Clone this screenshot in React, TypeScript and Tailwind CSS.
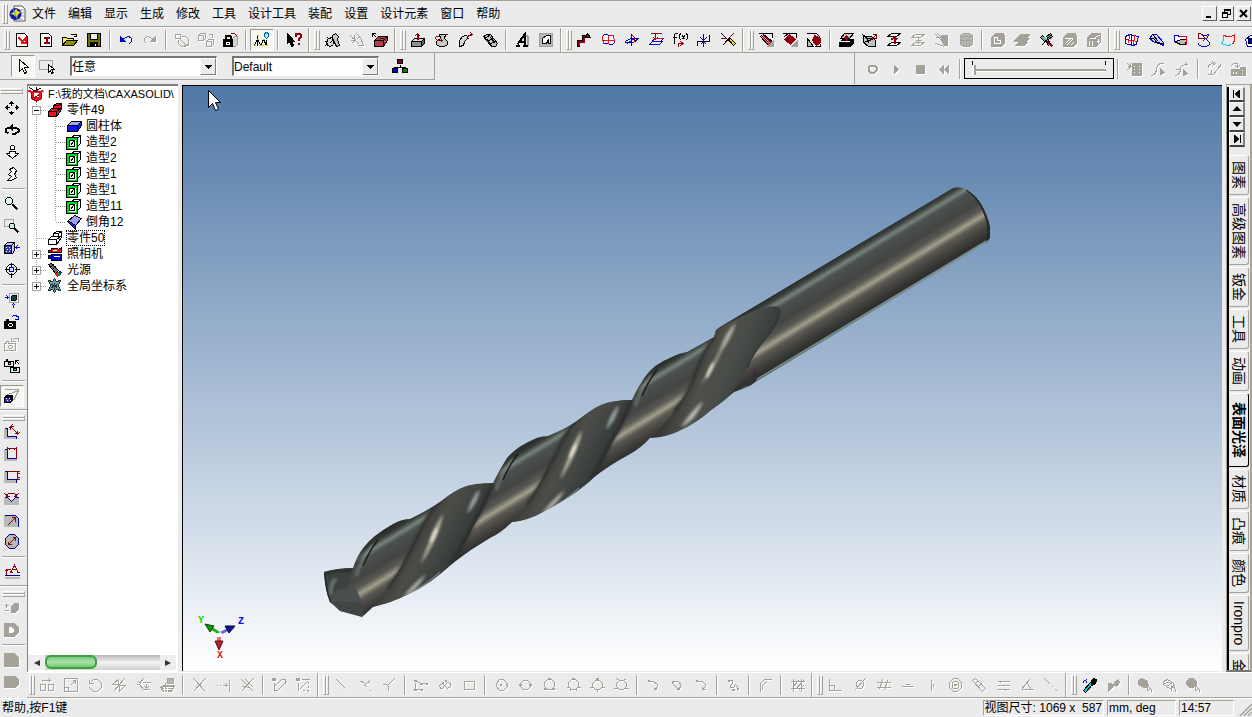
import { useState } from "react";
import clsx from "clsx";

const K = "#000000";
const R = "#900010";
const B = "#0000d0";
const G = "#a5a29a";
const W = "#ffffff";
const S = "#b8b8b4";
const N = "none";
const RED = "#f01020";
const CY = "#00d0d0";
const GN = "#00a000";

// [path, stroke, fill, stroke width]
type Shape = [string, string, string?, number?];

const icons: Record<string, Shape[]> = {
  // standard
  "new-design": [["M2 1h8l3 3v10h-11z", K, W], ["M4 5l4 4l3 -3v4h-5M8 10l3 1", RED, N, 2]],
  "new-drawing": [["M2 1h8l3 3v10h-11z", K, W], ["M5 5h6M5 10h6M8 5v5", R, N, 2]],
  open: [["M0 13v-8h4l1 1h6v3", K, "#f0f060"], ["M0 13l4 -5h11l-4 5z", K, "#909000"], ["M8 3q3 -3 6 0m0 -2v3h-3", K]],
  save: [["M1 1h13v13h-13z", K, "#707000"], ["M4 1h7v6h-7z", K, "#ebebeb"], ["M4 10h7v4h-7z", K, K], ["M9 11v2", W]],
  undo: [["M2 4v5h5zM4 7l3 -2q4 -2 6 1q1 3 -2 5", B, N], ["M2 5v4h4z", B, B]],
  redo: [["M13 4v5h-5zM11 7l-3 -2q-4 -2 -6 1q-1 3 2 5", G], ["M13 5v4h-4z", G, G]],
  regenerate: [["M1 2h5v4h-5zM7 4h4l3 3v4l-3 3h-4l-3 -3v-4M5 6l7 7M9 13h5v-4", G]],
  "copy-part": [["M0 3h5v5h-5zM0 3l2 -2h5v5l-2 2M8 9h5v5h-5zM8 9l2 -2h5v5l-2 2M10 2h4v3", G]],
  lock: [["M8 1h4q2 1 2 4M14 2v4h-3", R], ["M10 6l2 -2h3v8l-2 2h-3z", G, "#d0d0cc"], ["M1 7h9v7h-9z", K, K], ["M3 7v-3l1 -1h3l1 1v3", K, N, 2], ["M4 10h3v2h-3z", W]],
  "tree-view": [["M3 3v3l-3 7M3 6l3 7M8 7v1l-1 5M9 7l3 6M3 6v7", K], ["M3 2v1M3 6v1M0 12v1M5 12v1M9 6v1M12 12v1M8 12v1", "#c8c000", N, 2], ["M10 1l2 -1l2 1v3l-2 2l-2 -2z", "#0060b0", "#a0f0ff"], ["M12 7v4", K]],
  help: [["M1 1v10l2 -2l2 5l2 -1l-2 -4h3z", K, K], ["M9 4v-2l2 -1h2l1 1v3l-2 2v1M12 10v2", R, N, 2]],
  // animation
  gear: [["M2 9l2 -3l3 -1l3 3l-1 4l-3 2l-3 -1z", K, "#d8d8d0"], ["M0 9h3M3 5l2 2M6 4v2M1 13l3 -2M5 11l3 -3", K], ["M8 3l3 -2l3 3l-1 3l2 6l-3 1l-4 -8z", K, "#c8c8c0"]],
  "gear-off": [["M2 3l9 9M2 8h5M6 2v7M3 11l4 -4", G], ["M8 1l4 4l3 8h-6M9 6l3 -2M3 6h3", G]],
  block: [["M2 8l4 -4h9v4l-4 6h-9z", K, "#b04048"], ["M2 8h9l4 -4M11 8v6M7 6h4", K], ["M0 1l4 4M0 4v-3h3", K]],
  extrude: [["M1 9l3 -3h10l-3 3z", K, "#d8d8d4"], ["M11 9l3 -3v5l-3 3z", K, "#606060"], ["M1 9h10v5h-10z", K, "#909090"], ["M7 7v-6", R, N, 2], ["M4 4l3 -3l3 3", R]],
  revolve: [["M5 2h6l-1 4l3 3v3l-3 2h-5l-3 -2v-3l4 -3z", K, "#c8c8c4"], ["M10 2h3M4 4h-2q-2 2 1 4h5M6 6l2 2l-2 2", R]],
  sweep: [["M1 14v-5q2 -6 7 -6l2 3q-4 1 -5 7z", K, "#d8d8d4"], ["M8 5q3 -3 6 -3M12 0l2 2l-2 2", R]],
  loft: [["M1 4l3 -2h4l7 9l-2 3h-4z", K, "#c0c0bc"], ["M1 4l3 1l4 -3M4 7l3 1l4 -3M6 10l3 1l4 -3M2 5l8 9M8 5l5 6", K]],
  "text-3d": [["M11 3l2 1v9", G, N, 2], ["M3 12l7 -10v10M5 9h5M1 13h4M8 13h5", K, N, 2]],
  stencil: [["M1 1h13v13h-13z", G, S], ["M4 6l4 -3h4v8h-2v-4l-2 4h-4z", K, W]],
  // curves
  "curve-3d": [["M2 14v-5h5v-5h3", K, N, 3], ["M2 13v-4h5v-5h3", R, N, 2], ["M8 5l3 -4l3 4z", K, R]],
  surface: [["M2 4q4 -4 6 -1h5l1 7q-4 4 -6 1h-5z", B, W], ["M2 4l1 8M8 3h5l1 7M3 8h10M8 3v8", RED]],
  plane: [["M1 9l5 -3h8l-5 4h-8z", B, "#e8e8ff"], ["M7 1v12M3 11l8 -6", B], ["M8 3l2 2v4l-2 2", R]],
  parallel: [["M1 12l3 -3h10l-3 3zM4 8l3 -2h8l-3 3", B], ["M2 1h11M7 1v6M5 5l2 2l2 -2", R], ["M4 9l3 -3h7", RED]],
  formula: [["M0 5h4M2 11v-9l1 -1h2M8 1q-2 3 0 7M10 3l2 4M12 3l-2 4M14 1q2 3 0 7", K], ["M6 14v-3h4M8 9l3 2l-3 2", R]],
  split: [["M1 13v-4h12v-7", K], ["M7 1v13M4 5l3 3l3 -3M4 12l3 -3l3 3", B]],
  trim: [["M1 1l12 12M2 13l11 -12", K], ["M0 6h6M9 5l4 -4", R], ["M8 7l2 -1l5 5l-2 2z", K, "#f0e000"]],
  // faces
  "face-blend": [["M0 1h14v4", K], ["M2 4l3 -2l9 7l-4 4z", K, R], ["M4 3l8 8M3 4l8 8", "#e0a0a0"], ["M15 8v6h-6z", G, G]],
  "face-chamfer": [["M0 1h14v4", K], ["M7 2l6 5l-5 5l-6 -5z", R, R], ["M15 8v6h-6z", G, G], ["M2 4l4 -3", K]],
  "face-draft": [["M0 1h10l4 4", K], ["M8 3l6 3v4l-4 3l-4 -5z", R, R], ["M1 6v8h6l-3 -4z", K, S], ["M8 14h6v-3", K]],
  "layer-up": [["M1 10l3 -3h11v4l-3 3h-11z", K, K], ["M2 6l4 -5h9l-4 5z", K, "#c8c8c4"], ["M8 10v-6M6 6l2 -2l2 2", R, N, 2], ["M1 9h10", W]],
  "layer-cut": [["M1 4h8l4 4v6h-7l-5 -4z", K, "#c0c0bc"], ["M0 2l5 4h8M4 5l2 6M5 9l6 -3M1 10l5 -2", K], ["M7 9l7 -7M10 2h4v4", R]],
  "layer-move": [["M1 4l4 -3h9l-4 3zM1 13l4 -3h9l-4 3z", K, W], ["M8 11v-6M5 7l3 -2l3 2", R, N, 2]],
  "layer-off": [["M1 5l4 -3h9l-4 3zM1 13l4 -3h9l-4 3zM8 11v-6M5 8h6", G]],
  "fill-off": [["M1 2l12 12M3 1l10 9M1 11l9 3M1 5h7", G], ["M8 3h5v10h-3l-3 -5z", G, G]],
  "cylinder-off": [["M2 3l3 -2h6l3 2v9l-3 2h-6l-3 -2z", G, S], ["M2 4h12M5 4v9M8 5v9M11 4v9M2 8h12", G]],
  "solid-a": [["M1 5l4 -4h8l1 3v7l-3 3h-10z", G, G], ["M4 5v6h6v-3h-3v-3z", W, N]],
  "solid-b": [["M5 4l2 -2h8l-2 2zM1 8l2 -2h11l-2 2zM3 12l2 -2h7l-2 2z", G, G, 2]],
  "cut-tool": [["M2 5l2 -2l4 4l-2 2zM8 4l4 -3l2 3l-4 3zM7 8l3 0l2 3l-2 2z", K, "#909c98"], ["M3 13l9 -10", K], ["M9 9l5 5", R, N, 2], ["M6 5l4 4", CY]],
  "solid-c": [["M1 5l4 -4h8l1 3v7l-3 3h-10z", G, G], ["M3 11l5 -5M4 13l6 -6M8 13l3 -3M2 6h8", W]],
  "solid-d": [["M1 5l4 -4h9v9l-4 4h-9z", G, G], ["M3 8v5M6 8v5M9 5l5 -3M10 9h3M12 6v5M3 6h6", W]],
  mesh: [["M1 4l4 -2l9 2l-2 8l-4 1l-7 -2z", B, W], ["M5 2l-1 9M10 3l-1 10M2 7l11 2", RED], ["M7 2v11", B]],
  "mesh-fold": [["M1 6l3 -4h4l7 8v3l-4 -2l-5 -1z", B, "#d0d0f0"], ["M1 6q5 -2 7 4l7 1M4 2l6 7", K]],
  "mesh-sheet": [["M2 3h3l2 1h7l-1 8h-5l-6 -3z", B, W], ["M3 9l6 -2h5l-1 5h-5z", K, S], ["M7 4h7v8", RED]],
  "mesh-revolve": [["M4 1l3 2h3l3 -2M12 2l-2 5l3 3v2l-3 2h-5l-3 -2v-2", B], ["M1 6h8M6 3l3 3l-3 3M4 1h-2v4", R]],
  "mesh-boundary": [["M3 3l4 1h4l3 -2v6l-2 4", RED], ["M3 3v5l-2 3l6 2l4 -1", CY]],
  "mesh-solid": [["M1 7l5 -4h8v8l-4 3h-7z", B, W], ["M4 6h6v5h-6z", K, B]],
  // row 2
  arrow: [["M4 1v12l3 -3l2 5l2 -1l-2 -5h4z", K, W]],
  "box-select": [["M0 2h13v9h-13z", G], ["M9 6v8l2 -2l1 3l2 -1l-2 -3h3z", K, W]],
  hierarchy: [["M8 6v3M2 12v-3h11v3", K], ["M5 1h5v4h-5z", K, R], ["M0 10h5v4h-5z", K, B], ["M10 10h5v4h-5z", K, "#008000"]],
  record: [["M6 4h4l2 2v3l-2 2h-4l-2 -2v-3z", G, N, 2]],
  play: [["M6 4v8l4 -4z", G, G]],
  stop: [["M4 4h8v8h-8z", G, G]],
  rewind: [["M7 4v8l-4 -4zM12 4v8l-4 -4z", G, G]],
  film: [["M6 2h9v12h-9z", G, G], ["M1 2l3 3M4 1v4M1 5h5M1 8l4 -3", G], ["M8 4v1M8 7v1M8 10v1M13 4v1M13 7v1M13 10v1", W]],
  "path-a": [["M1 14q5 -1 5 -7q1 -5 5 -5h2", G], ["M10 7v6l4 -2z", G, G]],
  "path-b": [["M1 14q5 -1 5 -7q0 -4 7 -4M11 1l2 2l-2 2M1 8h4", G], ["M9 8v6l4 -2z", G, G]],
  "key-a": [["M2 6q0 -4 5 -4M6 0l3 2l-3 2M1 13h6l7 -9M14 2v3M5 8v5", G]],
  "key-b": [["M1 5q1 -4 6 -3v3M5 4l2 2l2 -2", G], ["M1 8h8v6h-8zM10 6h5v8h-5z", G, G], ["M3 10v2M6 10v2M12 8v1M12 11v1", W]],
  // camera
  pan: [["M7 3v2M7 10v2M3 7h2M10 7h2", K], ["M7 1l2 2h-4zM7 14l2 -2h-4zM1 7l2 -2v4zM14 7l-2 -2v4z", K, K]],
  orbit: [["M4 11l-3 -2v-2l3 -2h7l3 2v2l-3 2h-4", K, N, 2], ["M8 2v6l-3 -3z", K, K]],
  walk: [["M6 5v-3l1 -1h2l1 1v3zM5 7h6v2h3l-6 5l-6 -5h3z", K, W]],
  "look-at": [["M5 3l4 -2l3 3l-2 4l2 3l-5 3h-4l4 -4l-3 -2l3 -3z", K, W]],
  zoom: [["M1 3l2 -2h3l2 2v3l-2 2h-3l-2 -2z", K, "#d8f8f8"], ["M8 8l5 5", K, N, 2]],
  "zoom-window": [["M0 1h9v7h-9z", G], ["M5 6l1 -1h3l1 1v3l-1 1h-3l-1 -1z", K, "#c0f0f0"], ["M10 10l4 4", K, N, 2]],
  "face-view": [["M0 5l3 -3h7v8l-2 3h-8z", K, "#c8c8ff"], ["M0 5h7v8h-7z", K, "#3838c0"], ["M1 7h1M4 7h1M2 9h1M5 9h1M1 11h1M4 11h1", W], ["M7 5l3 -3", K], ["M10 7h5M13 5l-2 2l2 2", B]],
  target: [["M7 0v5M7 10v5M0 7h5M10 7h5M5 2h4l3 3v4l-3 3h-4l-3 -3v-4z", K], ["M5 5h4v4h-4z", B, "#e0e0ff"]],
  "fit-scene": [["M5 1h9v9h-9z", G], ["M7 4l1 -1h4v4l-1 1h-4z", K, "#104048"], ["M0 5h3M2 3l2 2l-2 2M9 15v-3M7 13l2 -2l2 2", B]],
  "camera-next": [["M0 7h2v-2h2v2h7v7h-11z", K, K], ["M5 9h2l1 1v1l-1 1h-2l-1 -1v-1z", W], ["M7 3l2 -2h3l1 2M14 1v4h-4", B]],
  "camera-prev": [["M0 7h2v-2h2v2h7v7h-11zM5 9h2l1 1v1l-1 1h-2l-1 -1v-1z", G], ["M14 5v-3h-4l-2 2M7 1v4h4", G]],
  "camera-swap": [["M0 3h2v-2h1v2h6v5h-9z", K], ["M4 4h2v2h-2z", K, "#a0ffd0"], ["M6 9h9v5h-9zM8 8v1", K], ["M9 10h3v2h-3z", K, "#50e0e0"], ["M11 5v-3h3M11 2l4 4", K]],
  perspective: [["M0 1h14M1 7l13 -5M9 12l5 -10", G], ["M0 9l2 -2h6v5l-2 2h-6z", K, "#000020"], ["M1 10h4v3h-4z", "#3030b0", "#3030b0"], ["M1 10h1M4 10h1M2 12h1M5 12h1", W]],
  // dimensions
  "dim-smart": [["M0 5h3v7h9v2h-12z", S, S], ["M0 4h3v8h9v2", "#0000a0"], ["M6 2l7 7M6 5v-3h3M13 6v3h-3M12 11l3 -3M4 4l4 -4", R]],
  "dim-width": [["M0 4h3v8h9v2h-12z", S, S], ["M0 3h3v9h9", "#0000a0"], ["M3 0v4M12 0v12M3 2h9M5 1v2M10 1v2", R]],
  "dim-height": [["M0 4h3v7h9v3h-12z", S, S], ["M0 3h3v8h9v3", "#0000a0"], ["M3 3h12M12 11h3M13 3v8M12 5h3M12 9h3", R]],
  "dim-angle": [["M0 8h3l4 4l4 -4h3v6h-14z", S, S], ["M0 7h3l4 4l4 -4h3", "#0000a0"], ["M2 6l2 -3h6l2 3M0 3l3 3M14 3l-3 3M2 3v3h3M12 3v3h-3", R]],
  "dim-radius": [["M0 3h11l3 3v8h-14z", S, S], ["M0 3h11l3 3v8", "#0000a0"], ["M3 13l8 -8M7 5h4v4", R]],
  "dim-diameter": [["M5 0h5l4 4v6l-4 4h-5l-4 -4v-6z", "#0000a0", S], ["M4 10l7 -7M8 3h3v3M4 7v3h3", R]],
  annotation: [["M0 13h15", S, N, 2], ["M0 11h15", "#0000a0"], ["M2 5v5M2 5h4M4 7l-2 -2l-1 2M6 8l4 -7l4 7M8 5h4M5 8h3M12 8h3", R]],
  "plus-minus": [["M0 5h4M2 3v4M0 10h4", G], ["M7 6l3 -3h4v6l-3 3h-4z", G, G]],
  "d-shape": [["M0 1h10l4 4v5l-4 4h-10z", G, G], ["M5 5h2l2 2v2l-2 1h-2z", W, W]],
  "shape-e": [["M0 1h10l4 4v9h-14z", G, G]],
  "shape-f": [["M0 2h11l3 3v5l-3 3h-11z", G, G]],
  // bottom
  "b-move": [["M1 7h5v6h-5zM9 7h5v6h-5zM2 3h8M9 1l2 2l-2 2", G]],
  "b-scale": [["M1 1h13v13h-13zM1 10h4v4M7 8l5 -5M9 3h3v3", G]],
  "b-rotate": [["M2 2v4h4M3 5l3 -3h4l4 4v4l-4 4h-4l-4 -4", G]],
  "b-mirror": [["M1 7l6 -5v5zM8 8h6l-6 6zM2 14l11 -13", G]],
  "b-offset": [["M1 7h3l4 5h6M7 5h8M3 4l3 3M8 1l-4 5M11 6v5M9 9l2 2l2 -2", G]],
  "b-project": [["M1 10l3 -2h11l-3 6h-8z", G, G], ["M8 1h6v5h-6z", G, S], ["M3 10h10M3 12h9M5 9v5M8 9v5", W], ["M6 5v5", G]],
  "b-trim": [["M2 1l12 13M2 14l12 -13", G]],
  "b-extend": [["M1 8h1M4 8h1M7 8h5M10 6l2 2l-2 2M14 2v12", G]],
  "b-break": [["M2 2l12 12M2 14l12 -13M6 2l8 8M3 9l8 1", G]],
  "b-drag": [["M1 1h3v2h-3z", G, G], ["M3 9l7 -7M5 14l10 -10M3 5v8h3M10 2h4v4", G]],
  "b-drag-grid": [["M1 1h3v2h-3z", G, G], ["M3 5v8M6 2h8M13 4v2M13 8v2M13 12v2M4 12l8 -8M7 13h2M11 13h2", G]],
  "b-line": [["M3 2l9 9", G]],
  "b-arc-tangent": [["M2 4q6 0 7 6M6 9l6 -6M9 5h3M13 12v1", G]],
  "b-normal": [["M1 7h4l2 2v4M6 8l7 -7", G]],
  "b-poly": [["M2 5v7h7M3 4l5 2h5", G], ["M1 3h2v1h-2zM1 12h2v1h-2zM8 12h1v1h-1zM7 6h2v1h-2zM13 6h1v1h-1z", G, G]],
  "b-spline": [["M3 11l-1 -3l3 -2l3 3l2 2l3 -2v-3l-3 -1l-3 3l-2 3z", G], ["M5 5h1v1h-1zM8 3h1v1h-1z", G, G]],
  "b-rect": [["M3 4h10v8h-10z", G]],
  "b-circle": [["M6 2h4l4 4v3l-4 4h-4l-3 -4v-3z", G], ["M7 7h1v1h-1zM13 7h1v1h-1z", G, G]],
  "b-circle-2p": [["M6 3h4l3 3v3l-3 3h-4l-3 -3v-3z", G], ["M2 7h2v1h-2zM12 7h2v1h-2z", G, G]],
  "b-circle-3p": [["M6 2h4l3 3v4l-3 3h-4l-3 -3v-4z", G], ["M7 1h2v1h-2zM3 11h2v1h-2zM11 11h2v1h-2z", G, G]],
  "b-circle-t": [["M6 2h4l3 3v4l-3 3h-4l-3 -3v-4zM1 10h3M12 10h3M5 13v-2M11 13v-2", G], ["M7 1h2v1h-2z", G, G]],
  "b-circle-2t": [["M6 3h4l3 3v3l-3 3h-4l-3 -3v-3zM0 10h4M12 10h4M8 12v2", G], ["M7 1h2v2h-2z", G, G]],
  "b-circle-3t": [["M6 3h4l3 3v3l-3 3h-4l-3 -3v-3zM0 11h5M11 11h5M3 1l3 2M13 1l-3 2", G]],
  "b-arc": [["M4 4h4l4 3v2l-2 3", G], ["M3 3h1v1h-1zM9 11h2v1h-2z", G, G]],
  "b-arc-3p": [["M3 4h6l3 4l-3 4M3 6l6 6", G], ["M3 4h1v1h-1zM8 11h2v1h-2z", G, G]],
  "b-arc-t": [["M4 4h5l3 3v2l-3 3M9 9v3h3", G], ["M3 3h1v1h-1z", G, G]],
  "b-bezier": [["M4 3h3v3l-2 2v2h3l2 -3l2 2v2", G], ["M3 3h1v1h-1zM7 12h2v1h-2zM12 11h1v1h-1z", G, G]],
  "b-fillet": [["M3 14v-8l4 -4h7M5 12v-4l3 -3h1", G]],
  "b-hatch": [["M1 4h14M1 11h14M4 1v13M12 1v13M3 10l6 -7M6 12l8 -9M9 13l5 -5", G]],
  "b-perp": [["M2 1v12h12M2 8h5v5", G]],
  "b-tangent": [["M5 5l2 -2h3l2 2v3l-2 3h-3l-2 -2zM3 13l11 -12", G]],
  "b-parallel": [["M1 5h14M1 10h14M4 12l3 -10M9 13l3 -10", G]],
  "b-horizontal": [["M2 9h12M6 7h4", G]],
  "b-vertical": [["M8 2v11M10 6v3", G]],
  "b-concentric": [["M6 1h4l4 4v5l-4 4h-4l-4 -4v-5zM6 4h4l1 1v5l-1 1h-4l-1 -1v-5z", G], ["M7 7h2v1h-2z", G, G]],
  "b-symmetric": [["M1 3l3 -2l10 10l-3 3zM4 6l2 -2M7 9l3 -3", G]],
  "b-equal": [["M2 4h12M2 8h12M2 12h12M5 3v2M10 11v2", G]],
  "b-angle": [["M2 12h12M2 12l8 -10M8 6l4 6", G]],
  "b-collinear": [["M1 1l6 6M9 9l1 1M12 12l2 2", G]],
  "pick-style": [["M2 13l7 -8l2 2l-7 8z", K, CY], ["M9 5l3 -4l3 1l-1 4l-3 2z", K, K], ["M1 6l2 -3M3 3l3 -1M5 3v2", B]],
  "apply-style": [["M3 6v8l7 -7zM9 5l4 -3l1 3l-3 4z", G, G]],
  "select-a": [["M1 3l4 -2l5 3l1 5l-4 1l-6 -3z", G, G], ["M10 8l4 4v2M10 8v5l3 -1", G]],
  "select-b": [["M2 4l4 -2l6 4l1 4l-5 1l-6 -4zM3 6l7 -2M5 9l6 -4M10 8l4 4v2M10 8v5", G]],
  "select-c": [["M4 1h4l3 3v4l-3 2h-4l-3 -3v-3z", G, G], ["M10 8l4 4v2M10 8v5l3 -1", G]],
  // tree
  scene: [["M3 6l5 -2l5 2v6l-5 3l-5 -3z", R, RED], ["M0 4l8 4l7 -4", RED, N, 2], ["M1 1l6 4M13 1l-5 3M8 0v3", K], ["M6 7h4v3h-4z", W, W], ["M4 12l7 -4", R]],
  part: [["M1 9l3 -3h2v-3l3 -2h5v6l-5 7h-8z", K, RED], ["M1 9h8v5M9 9l5 -4M6 6h5M6 3h5l3 -2", K]],
  "part-empty": [["M1 9l3 -3h2v-3l3 -2h5v6l-5 7h-8z", K, W], ["M1 9h8v5M9 9l5 -4M6 6h5v-3l3 -2M6 3h5", K]],
  block3d: [["M1 7l4 -4h10v4l-4 6h-10z", K, "#1018f0"], ["M1 7l4 -4h10l-4 4z", K, "#a0a8ff"], ["M11 7v6", K]],
  shape: [["M4 4l3 -3h7v8l-3 3", K, W], ["M11 4l3 -3M11 4h-4M7 1v3", K], ["M1 4h9v10h-9z", "#00d820", W, 2], ["M0 3h11v12h-11zM3 6h5v6h-5z", K], ["M4 11l3 -4", K]],
  chamfer: [["M1 7l7 -6l7 3l-6 7z", K, "#98a0f8"], ["M1 7h2l6 4v4z", K, "#2028d0"]],
  camera: [["M4 2h6l1 1l3 -2v5h-10z", K, RED], ["M1 4h3v2h-3z", K, RED], ["M4 8h10v6h-10zM1 9h3v3h-3z", K, B], ["M5 4h4M6 10h6", W]],
  light: [["M1 2l3 -1l7 7l-3 3z", K, "#707070"], ["M3 5l3 -3M5 7l3 -3", K], ["M8 11l3 3", RED, N, 2], ["M10 10l3 3", GN, N, 2], ["M12 9l2 2", B, N, 2]],
  coords: [["M7 0l2 3l4 -1l-2 5l2 5l-4 -1l-2 3l-2 -3l-4 1l2 -5l-2 -5l4 1z", "#203840", "#8098a0"], ["M7 4v7M4 6l6 3M4 9l6 -3", "#203840"]],
};

function Icon({ name }: { name: string }) {
  const shapes = icons[name];
  const off = shapes.every(([, stroke]) => stroke === G || stroke === W);
  return (
    <svg
      viewBox="0 0 16 16"
      shapeRendering="crispEdges"
      aria-hidden="true"
      className={clsx("size-4 shrink-0", off && "drop-shadow-[1px_1px_0_#ffffff]")}
    >
      <g transform="translate(.5 .5)">
        {shapes.map(([d, stroke, fill = N, width = 1], i) => (
          <path key={i} d={d} stroke={stroke} fill={fill} strokeWidth={width} />
        ))}
      </g>
    </svg>
  );
}

interface ToolItemsProps {
  items: string[];
  vertical?: boolean;
  pressed?: string;
}

// "|" is a separator, "#" the end of one bar and the grip of the next
function ToolItems({ items, vertical, pressed }: ToolItemsProps) {
  return (
    <>
      {items.map((item, i) => {
        if (item === "|") {
          return (
            <span
              key={i}
              className={clsx(
                "flex shrink-0 items-center justify-center",
                vertical ? "h-2 w-full" : "h-full w-2",
              )}
            >
              <span
                className={clsx(
                  "border-[#a5a29a] bg-white",
                  vertical ? "h-[2px] w-[23px] border-t" : "h-5 w-[2px] border-l",
                )}
              />
            </span>
          );
        }
        if (item === "#") {
          return (
            <span
              key={i}
              className={clsx(
                "flex shrink-0 items-center justify-end gap-1",
                vertical ? "h-[14px] w-full flex-col" : "h-full w-[14px]",
              )}
            >
              <span className={clsx("border-[#a5a29a] bg-white", vertical ? "h-[2px] w-full border-t" : "h-full w-[2px] border-l")} />
              <Grip vertical={vertical} />
            </span>
          );
        }
        return (
          <button
            key={i}
            type="button"
            aria-label={item}
            className={clsx(
              "flex h-[22px] w-6 shrink-0 items-center justify-center",
              item === pressed && "border border-t-[#9a978f] border-l-[#9a978f] border-r-white border-b-white bg-[#f6f6f2]",
            )}
          >
            <Icon name={item} />
          </button>
        );
      })}
    </>
  );
}

function Grip({ vertical }: { vertical?: boolean }) {
  const bar = clsx(
    "border border-t-white border-l-white border-r-[#a5a29a] border-b-[#a5a29a]",
    vertical ? "h-[3px] w-[23px]" : "h-5 w-[3px]",
  );
  return (
    <span className={clsx("flex shrink-0", vertical && "flex-col")}>
      <span className={bar} />
      <span className={bar} />
    </span>
  );
}

const menus = ["文件", "编辑", "显示", "生成", "修改", "工具", "设计工具", "装配", "设置", "设计元素", "窗口", "帮助"];

const topTools = [
  "new-design", "new-drawing", "open", "save", "|", "undo", "redo", "|", "regenerate", "copy-part", "lock", "|",
  "tree-view", "|", "help", "#", "gear", "gear-off", "block", "#", "extrude", "revolve", "sweep", "loft", "|",
  "text-3d", "stencil", "#", "curve-3d", "surface", "plane", "parallel", "formula", "split", "trim", "#",
  "face-blend", "face-chamfer", "face-draft", "|", "layer-up", "layer-cut", "layer-move", "layer-off", "fill-off",
  "cylinder-off", "|", "solid-a", "solid-b", "cut-tool", "solid-c", "solid-d", "#", "mesh", "mesh-fold",
  "mesh-sheet", "mesh-revolve", "mesh-boundary", "mesh-solid",
];

const sideTools = [
  "pan", "orbit", "walk", "look-at", "|", "zoom", "zoom-window", "face-view", "target", "|", "fit-scene",
  "camera-next", "camera-prev", "camera-swap", "|", "perspective", "#", "dim-smart", "dim-width", "dim-height",
  "dim-angle", "dim-radius", "dim-diameter", "|", "annotation", "#", "plus-minus", "d-shape", "|", "shape-e", "shape-f",
];

const bottomTools = [
  "b-move", "b-scale", "b-rotate", "b-mirror", "b-offset", "b-project", "|", "b-trim", "b-extend", "b-break", "|",
  "b-drag", "b-drag-grid", "#", "b-line", "b-arc-tangent", "b-normal", "|", "b-poly", "b-spline", "b-rect", "|",
  "b-circle", "b-circle-2p", "b-circle-3p", "b-circle-t", "b-circle-2t", "b-circle-3t", "|", "b-arc", "b-arc-3p",
  "b-arc-t", "|", "b-bezier", "|", "b-fillet", "|", "b-hatch", "#", "b-perp", "b-tangent", "b-parallel",
  "b-horizontal", "b-vertical", "b-concentric", "b-symmetric", "b-equal", "b-angle", "b-collinear", "#",
  "pick-style", "apply-style", "|", "select-a", "select-b", "select-c",
];

function MenuBar() {
  const button =
    "flex size-[15px] items-center justify-center border border-t-white border-l-white border-r-[#606060] border-b-[#606060] bg-[#ebebeb]";
  return (
    <header className="flex h-[27px] shrink-0 items-center border-t border-b border-[#a5a29a] pr-px pl-[2px]">
      <Grip />
      <svg viewBox="0 0 18 18" className="mr-[5px] ml-px size-[18px]" aria-hidden="true">
        <path d="M5 1h8l3 3v12H5z" fill="#fff" stroke="#555" />
        <path d="M10 5h5M11 8h4M12 11h3M10 14h4" stroke="#999" />
        <circle cx="6.500" cy="9" r="6" fill="#1818a0" />
        <path d="M1 9q5-2 6-6q1 4 5 4q-4 2-4 7q-2-5-7-5z" fill="#e8e020" />
        <path d="M4 4l4 9" stroke="#30b0a0" />
      </svg>
      <nav className="flex flex-1 gap-3 pt-px text-xs leading-4">
        {menus.map((menu) => (
          <button key={menu} type="button" className="shrink-0">
            {menu}
          </button>
        ))}
      </nav>
      <div className="flex gap-[2px]">
        <button type="button" aria-label="最小化" className={button}>
          <svg viewBox="0 0 11 11" className="size-[11px]" shapeRendering="crispEdges">
            <path d="M2 8h5v2H2z" />
          </svg>
        </button>
        <button type="button" aria-label="还原" className={button}>
          <svg viewBox="0 0 11 11" className="size-[11px]" shapeRendering="crispEdges">
            <path d="M3.500 4V1.500h6v5H7M3 2.500h7M1.500 4.500h5v5h-5zM1 5.500h6" fill="none" stroke="#000" />
          </svg>
        </button>
        <button type="button" aria-label="关闭" className={button}>
          <svg viewBox="0 0 11 11" className="size-[11px]">
            <path d="M2 2l7 7M9 2l-7 7" stroke="#000" strokeWidth="2" />
          </svg>
        </button>
      </div>
    </header>
  );
}

interface ComboProps {
  label: string;
  value: string;
}

function Combo({ label, value }: ComboProps) {
  return (
    <div className="relative h-5 w-[147px] border border-t-2 border-l-2 border-t-[#77756f] border-l-[#77756f] border-r-white border-b-white bg-white">
      <select
        aria-label={label}
        defaultValue={value}
        className="block h-full w-full appearance-none bg-transparent pr-4 text-xs leading-4 outline-none"
      >
        <option>{value}</option>
      </select>
      <span className="pointer-events-none absolute top-0 right-0 flex h-full w-4 items-center justify-center border border-t-white border-l-white border-r-[#808080] border-b-[#808080] bg-[#ebebeb]">
        <svg viewBox="0 0 7 4" className="h-1 w-[7px]" shapeRendering="crispEdges">
          <path d="M0 0h7L3.500 4z" />
        </svg>
      </span>
    </div>
  );
}

function SelectionBar() {
  const [frame, setFrame] = useState(0);
  return (
    <div className="flex h-[31px] shrink-0 justify-between overflow-hidden">
      <div className="flex h-[27px] shrink-0 items-center border-r border-b border-[#a5a29a] pr-[22px] pl-[11px]">
        <ToolItems items={["arrow", "box-select"]} pressed="arrow" />
        <div className="ml-[11px] flex gap-[15px]">
          <Combo label="选择过滤" value="任意" />
          <Combo label="配置" value="Default" />
        </div>
        <div className="ml-[9px] flex">
          <ToolItems items={["hierarchy"]} />
        </div>
      </div>
      <div className="flex h-[31px] shrink-0 items-center border-l border-[#a5a29a] pr-[2px] pl-[5px]">
        <ToolItems items={["record", "play", "stop", "rewind", "|"]} />
        <div className="flex h-[21px] w-[150px] flex-col justify-center border border-black px-[7px]">
          <div className="flex justify-between">
            <span className="h-1 w-px bg-black" />
            <span className="h-1 w-px bg-black" />
          </div>
          <input
            type="range"
            aria-label="动画进度"
            min={0}
            max={100}
            value={frame}
            onChange={(e) => setFrame(Number(e.target.value))}
            className="block h-[11px] w-full appearance-none bg-transparent [&::-webkit-slider-runnable-track]:h-[3px] [&::-webkit-slider-runnable-track]:border-b [&::-webkit-slider-runnable-track]:border-white [&::-webkit-slider-runnable-track]:bg-[#a5a29a] [&::-webkit-slider-thumb]:-mt-1 [&::-webkit-slider-thumb]:h-[10px] [&::-webkit-slider-thumb]:w-1 [&::-webkit-slider-thumb]:appearance-none [&::-webkit-slider-thumb]:border-r-2 [&::-webkit-slider-thumb]:border-[#a5a29a] [&::-webkit-slider-thumb]:bg-white"
          />
        </div>
        <ToolItems items={["|", "film", "path-a", "path-b", "|", "key-a", "key-b"]} />
      </div>
    </div>
  );
}

interface TreeNode {
  label: string;
  icon: string;
  level: number;
  mark?: "+" | "-";
  last?: boolean;
  focused?: boolean;
}

const treeNodes: TreeNode[] = [
  { label: "零件49", icon: "part", level: 1, mark: "-" },
  { label: "圆柱体", icon: "block3d", level: 2 },
  { label: "造型2", icon: "shape", level: 2 },
  { label: "造型2", icon: "shape", level: 2 },
  { label: "造型1", icon: "shape", level: 2 },
  { label: "造型1", icon: "shape", level: 2 },
  { label: "造型11", icon: "shape", level: 2 },
  { label: "倒角12", icon: "chamfer", level: 2, last: true },
  { label: "零件50", icon: "part-empty", level: 1, focused: true },
  { label: "照相机", icon: "camera", level: 1, mark: "+" },
  { label: "光源", icon: "light", level: 1, mark: "+" },
  { label: "全局坐标系", icon: "coords", level: 1, mark: "+", last: true },
];

function Branch({ mark, last, pass }: { mark?: string; last?: boolean; pass?: boolean }) {
  return (
    <svg viewBox="0 0 19 16" className="h-4 w-[19px] shrink-0" shapeRendering="crispEdges" aria-hidden="true">
      <path d={last ? "M8.500 0v8" : "M8.500 0v16"} stroke="#a0a0a0" strokeDasharray="1 1" />
      {!pass && <path d="M9 8.500h10" stroke="#a0a0a0" strokeDasharray="1 1" />}
      {mark && <path d="M4.500 4.500h8v8h-8z" fill="#fff" stroke="#a0a0a0" />}
      {mark && <path d="M6 8.500h5" stroke="#000" />}
      {mark === "+" && <path d="M8.500 6v5" stroke="#000" />}
    </svg>
  );
}

function DesignTree() {
  return (
    <aside className="flex w-[151px] shrink-0 flex-col border-t-2 border-l border-[#808080] bg-white pr-[2px]">
      <ul className="flex-1 overflow-hidden text-xs leading-4 whitespace-nowrap">
        <li className="flex h-4 items-center gap-1">
          <Icon name="scene" />
          <span className="text-[11px]">F:\我的文档\CAXASOLID\</span>
        </li>
        {treeNodes.map((node, i) => (
          <li key={i} className="flex h-4 items-center">
            {node.level === 2 && <Branch pass />}
            <Branch mark={node.mark} last={node.last} />
            <Icon name={node.icon} />
            <span
              className={clsx(
                "ml-[3px] border leading-[14px]",
                node.focused ? "border-dotted border-black" : "border-transparent",
              )}
            >
              {node.label}
            </span>
          </li>
        ))}
      </ul>
      <div className="mb-[2px] flex h-[15px] bg-linear-to-b from-[#b8b8b8] via-[#f4f4f4] to-[#d0d0d0]">
        <button type="button" aria-label="向左" className="flex w-[17px] items-center justify-center bg-[#eeeeee]">
          <svg viewBox="0 0 6 6" className="size-[6px]">
            <path d="M6 0v6L0 3z" fill="#333" />
          </svg>
        </button>
        <div className="flex-1">
          <div className="h-[14px] w-[52px] rounded-[6px] border-2 border-[#3ca040] bg-linear-to-b from-[#7cc880] via-[#a8e0a8] to-[#70cc74]" />
        </div>
        <button type="button" aria-label="向右" className="flex w-4 items-center justify-center bg-[#eeeeee]">
          <svg viewBox="0 0 6 6" className="size-[6px]">
            <path d="M0 0v6l6-3z" fill="#333" />
          </svg>
        </button>
      </div>
    </aside>
  );
}

const BODY =
  "M324 572Q337 568 353 568Q357 555 364 547Q372 536 393 524Q402 519 410 519Q430 509 440 502Q455 490 464 487Q474 483 493 483Q500 469 507 458Q517 446 537 438Q543 436 548 436Q565 429 577 421Q592 409 601 405Q613 400 632 400Q637 388 645 377Q654 364 670 358Q680 353 687 352L714 337L716 330L720 327L953 188Q959 186 966 189Q984 200 990 227V238L986 243L754 383L748 387L734 392Q722 403 710 411Q697 423 677 432Q668 437 650 438Q641 448 630 454Q608 466 593 478Q579 493 543 512Q530 520 512 522Q501 533 490 538Q471 549 453 563Q430 585 407 595Q393 602 373 607L362 617L340 611L330 602Q325 590 324 572Z";

// One turn of the flute, shifted along the axis of the drill
function Flute({ dx, dy }: { dx: number; dy: number }) {
  return (
    <g transform={`translate(${dx} ${dy})`}>
      <path
        d="M440 502Q457 490 464 487Q474 483 494 483Q486 505 473 527Q463 547 453 564Q444 570 433 580Q420 589 407 595Q392 603 372 607Q389 590 403 563Q414 540 422 527Q430 508 440 502Z"
        fill="url(#flute)"
      />
      <path d="M493 484Q485 505 472 527Q462 547 452 564" fill="none" stroke="#252826" strokeWidth="4" opacity=".6" filter="url(#faint)" />
      <path d="M440 502Q430 508 420 531Q407 560 388 588" fill="none" stroke="#252826" strokeWidth="3" opacity=".6" filter="url(#faint)" />
      <path d="M443 514Q433 528 428 545Q423 556 421 564Q433 546 438 532Q442 522 443 514Z" fill="#c9c6b0" opacity=".85" filter="url(#soft)" />
      <ellipse cx="434" cy="535" rx="1.500" ry="8" transform="rotate(24 434 535)" fill="#e6e3cd" filter="url(#faint)" />
      <path d="M480 489Q471 497 467 514Q478 503 480 489Z" fill="#a3b0ac" opacity=".9" filter="url(#soft)" />
      <path d="M426 574Q414 583 402 598Q416 592 426 574Z" fill="#c4c7be" opacity=".9" filter="url(#soft)" />
      <path d="M440 572Q425 586 408 594" fill="none" stroke="#8fa3a6" strokeWidth="1.500" opacity=".6" />
    </g>
  );
}

function Ridge({ dx, dy }: { dx: number; dy: number }) {
  return (
    <g transform={`translate(${dx} ${dy})`} fill="none">
      <path d="M355 566Q362 550 377 537Q388 528 402 523" stroke="#303432" strokeWidth="3" opacity=".7" filter="url(#faint)" />
      <path d="M356 576Q363 556 373 545" stroke="#7d8782" strokeWidth="3" opacity=".6" filter="url(#faint)" />
      <path d="M363 566Q368 553 378 540" stroke="#1c1e1d" strokeWidth="1.500" />
    </g>
  );
}

function Viewport() {
  return (
    <main className="my-px min-w-0 flex-1 border-t border-l border-black bg-linear-to-b from-[#5078a6] to-white">
      <svg viewBox="183 86 1039 585" className="h-full w-full" role="img" aria-label="三维设计环境">
        <defs>
          <clipPath id="body">
            <path d={BODY} />
          </clipPath>
          <linearGradient id="steel" gradientUnits="userSpaceOnUse" x1="836" y1="258" x2="870" y2="314">
            <stop offset="0" stopColor="#2a2e2c" />
            <stop offset=".06" stopColor="#3d423f" />
            <stop offset=".13" stopColor="#75827b" />
            <stop offset=".2" stopColor="#4b504d" />
            <stop offset=".4" stopColor="#434543" />
            <stop offset=".52" stopColor="#5a5952" />
            <stop offset=".61" stopColor="#a09e8c" />
            <stop offset=".69" stopColor="#5a5851" />
            <stop offset=".82" stopColor="#403f3c" />
            <stop offset=".94" stopColor="#2c2e2d" />
            <stop offset=".98" stopColor="#5f7272" />
            <stop offset="1" stopColor="#8fa3a6" />
          </linearGradient>
          <linearGradient id="flute" gradientUnits="userSpaceOnUse" x1="414" y1="520" x2="470" y2="552">
            <stop offset="0" stopColor="#323533" />
            <stop offset=".35" stopColor="#4c4d48" />
            <stop offset=".6" stopColor="#414542" />
            <stop offset="1" stopColor="#2d312f" />
          </linearGradient>
          <linearGradient id="runout" gradientUnits="userSpaceOnUse" x1="695" y1="350" x2="758" y2="378">
            <stop offset="0" stopColor="#343735" />
            <stop offset=".3" stopColor="#50504a" />
            <stop offset=".6" stopColor="#484c49" />
            <stop offset="1" stopColor="#343836" />
          </linearGradient>
          <filter id="soft" x="-100%" y="-100%" width="300%" height="300%">
            <feGaussianBlur stdDeviation="1.800" />
          </filter>
          <filter id="faint" x="-100%" y="-100%" width="300%" height="300%">
            <feGaussianBlur stdDeviation="1" />
          </filter>
        </defs>

        <path d={BODY} fill="url(#steel)" />
        <g clipPath="url(#body)">
          <path d="M966 190Q981 200 987 222Q989 234 986 243L992 240V220Q984 200 966 190Z" fill="#272a29" stroke="#272a29" />
          <path d="M754 381L987 241" stroke="#8fa8a9" strokeWidth="1.500" opacity=".7" />

          <Ridge dx={0} dy={0} />
          <Ridge dx={140} dy={-86} />
          <Ridge dx={279} dy={-170} />
          <Flute dx={0} dy={0} />
          <Flute dx={139} dy={-84} />

          <path
            d="M714 337L716 330Q742 315 760 309Q780 303 780 310Q778 326 763 341Q750 360 747 368Q739 384 727 398Q708 414 695 423Q678 435 652 438Q668 421 677 407Q689 391 696 372Q704 348 714 337Z"
            fill="url(#runout)"
          />
          <path d="M714 337Q704 348 696 372Q689 391 674 411" fill="none" stroke="#252826" strokeWidth="3" opacity=".6" filter="url(#faint)" />
          <path d="M780 310Q778 326 763 341Q750 360 747 368" fill="none" stroke="#292c2a" strokeWidth="1.500" opacity=".6" />
          <path d="M736 323Q726 331 721 347Q716 360 700 386Q714 370 721 352Q732 337 736 323Z" fill="#c0beab" opacity=".9" filter="url(#soft)" />
          <ellipse cx="710" cy="370" rx="1.500" ry="9" transform="rotate(24 710 370)" fill="#e0ddc8" filter="url(#faint)" />
          <path d="M703 401Q692 410 681 427Q696 420 703 401Z" fill="#b9bbb1" filter="url(#soft)" />
          <path d="M746 380Q755 377 755 365L757 379Q753 387 747 386Z" fill="#303332" />

          <path d="M324 572Q337 568 353 568Q351 583 345 587L337 590L332 600Q325 590 324 572Z" fill="#3c423f" />
          <path d="M325 574Q336 570 352 570" fill="none" stroke="#2b2f2d" strokeWidth="3" filter="url(#faint)" />
          <path d="M336 579Q330 583 331 595" fill="none" stroke="#7f9290" strokeWidth="3" opacity=".8" filter="url(#soft)" />
          <path d="M332 598L337 590Q346 592 356 588L362 603L363 616L340 611L331 603Z" fill="#4b4f4d" />
          <path d="M332 601L362 603L363 616L340 611Z" fill="#414543" />
          <path d="M324 573L328 597L331 603" fill="none" stroke="#222524" strokeWidth="2" />
        </g>

        <g strokeWidth="1">
          <path d="M219 633L211 628" stroke="#20b020" strokeWidth="3" />
          <path d="M205 624L214 626L210 632Z" fill="#109010" stroke="#065006" />
          <path d="M221 633L229 629" stroke="#6868e0" strokeWidth="3" />
          <path d="M235 626L225 626L229 633Z" fill="#101098" stroke="#060640" />
          <path d="M219 636V642" stroke="#e07070" strokeWidth="4" />
          <path d="M219 650L215 641H223Z" fill="#b02028" stroke="#601010" />
          <path d="M217 633h5v4h-5z" fill="#fff" />
        </g>
        <g fontFamily="Liberation Mono, monospace" fontSize="10" fontWeight="700">
          <text x="198" y="623" fill="#00e000">Y</text>
          <text x="238" y="624" fill="#1010e0">Z</text>
          <text x="217" y="658" fill="#f01010">X</text>
        </g>
        <path d="M208.500 90.500v17l4-4l3 7l3-1.500l-3-6.500h5z" fill="#fff" stroke="#000" />
      </svg>
    </main>
  );
}

const catalogs = ["图素", "高级图素", "钣金", "工具", "动画", "表面光泽", "材质", "凸痕", "颜色", "Ironpro", "金属"];

const scrollMarks = [
  "M1 1h1v8h-1zM8 1v8h-1L3 5.500v-1L7 1z",
  "M0.500 7L5 2L9.500 7z",
  "M0.500 3L5 8L9.500 3z",
  "M8 1h1v8h-1zM2 1v8h1L7 5.500v-1L3 1z",
];

function CatalogTabs() {
  const [active, setActive] = useState("表面光泽");
  return (
    <div className="ml-1 flex w-[26px] shrink-0 flex-col overflow-hidden border-t border-l border-r-2 border-b-2 border-t-[#a5a29a] border-l-[#a5a29a] border-r-[#a5a29a] border-b-[#77756f] pt-[2px]">
      <div className="flex flex-1 flex-col overflow-hidden border-l-2 border-black">
        {scrollMarks.map((mark, i) => (
          <button
            key={i}
            type="button"
            aria-label={"滚动 " + (i + 1)}
            className="flex h-[15px] w-4 shrink-0 items-center justify-center border-t border-l border-r-2 border-b-2 border-t-white border-l-white border-r-[#808080] border-b-[#404040] bg-[#ebebeb]"
          >
            <svg viewBox="0 0 10 10" className="size-[10px]">
              <path d={mark} />
            </svg>
          </button>
        ))}
        <div role="tablist" className="mt-2 flex min-h-0 flex-1 flex-col gap-[2px] overflow-hidden">
          {catalogs.map((name) => (
            <button
              key={name}
              type="button"
              role="tab"
              aria-selected={name === active}
              onClick={() => setActive(name)}
              className={clsx(
                "flex w-5 shrink-0 items-center justify-center rounded-r-[3px] border-t border-r border-b border-t-white text-sm leading-[18px] [text-orientation:sideways] [writing-mode:vertical-rl]",
                name === active
                  ? "border-r-black border-b-black pt-2 pb-2 font-bold"
                  : "border-r-[#a5a29a] border-b-[#a5a29a] pt-[5px] pb-[5px]",
              )}
            >
              {name}
            </button>
          ))}
        </div>
      </div>
    </div>
  );
}

function StatusBar() {
  const cell = "border border-t-[#a5a29a] border-l-[#a5a29a] border-r-white border-b-white px-px leading-[14px]";
  return (
    <footer className="flex h-[19px] shrink-0 items-center border-t border-white pl-[2px] text-xs">
      <span className="flex-1">帮助,按F1键</span>
      <div className="flex gap-[3px] whitespace-nowrap">
        <span className={cell}>视图尺寸: 1069 x&nbsp; 587</span>
        <span className={clsx(cell, "w-[69px]")}>mm, deg</span>
        <span className={clsx(cell, "w-[55px]")}>14:57</span>
      </div>
      <svg viewBox="0 0 16 16" className="ml-[2px] size-4" aria-hidden="true">
        <path d="M4 16L16 4M8 16l8-8M12 16l4-4" stroke="#a5a29a" strokeWidth="1.500" />
      </svg>
    </footer>
  );
}

export default function App() {
  return (
    <div className="flex h-screen flex-col overflow-hidden bg-[#ebebeb] font-['Liberation_Sans','Noto_Sans_CJK_SC',sans-serif] text-black">
      <MenuBar />
      <div className="flex h-[26px] shrink-0 items-center overflow-hidden border-t border-b border-t-white border-b-[#a5a29a] pl-1">
        <Grip />
        <ToolItems items={topTools} pressed="tree-view" />
      </div>
      <SelectionBar />
      <div className="flex min-h-0 flex-1">
        <div className="flex w-[27px] shrink-0 flex-col items-start overflow-hidden pt-1">
          <Grip vertical />
          <div className="mt-[3px] flex w-full flex-col">
            <ToolItems items={sideTools} vertical pressed="perspective" />
          </div>
        </div>
        <div className="flex min-w-0 flex-1 flex-col">
          <div className="flex min-h-0 flex-1">
            <DesignTree />
            <div className="w-1 shrink-0" />
            <Viewport />
            <CatalogTabs />
          </div>
          <div className="flex h-[26px] shrink-0 items-center overflow-hidden border-t border-b border-t-white border-b-[#a5a29a] pl-[2px]">
            <Grip />
            <ToolItems items={bottomTools} />
          </div>
        </div>
      </div>
      <StatusBar />
    </div>
  );
}
